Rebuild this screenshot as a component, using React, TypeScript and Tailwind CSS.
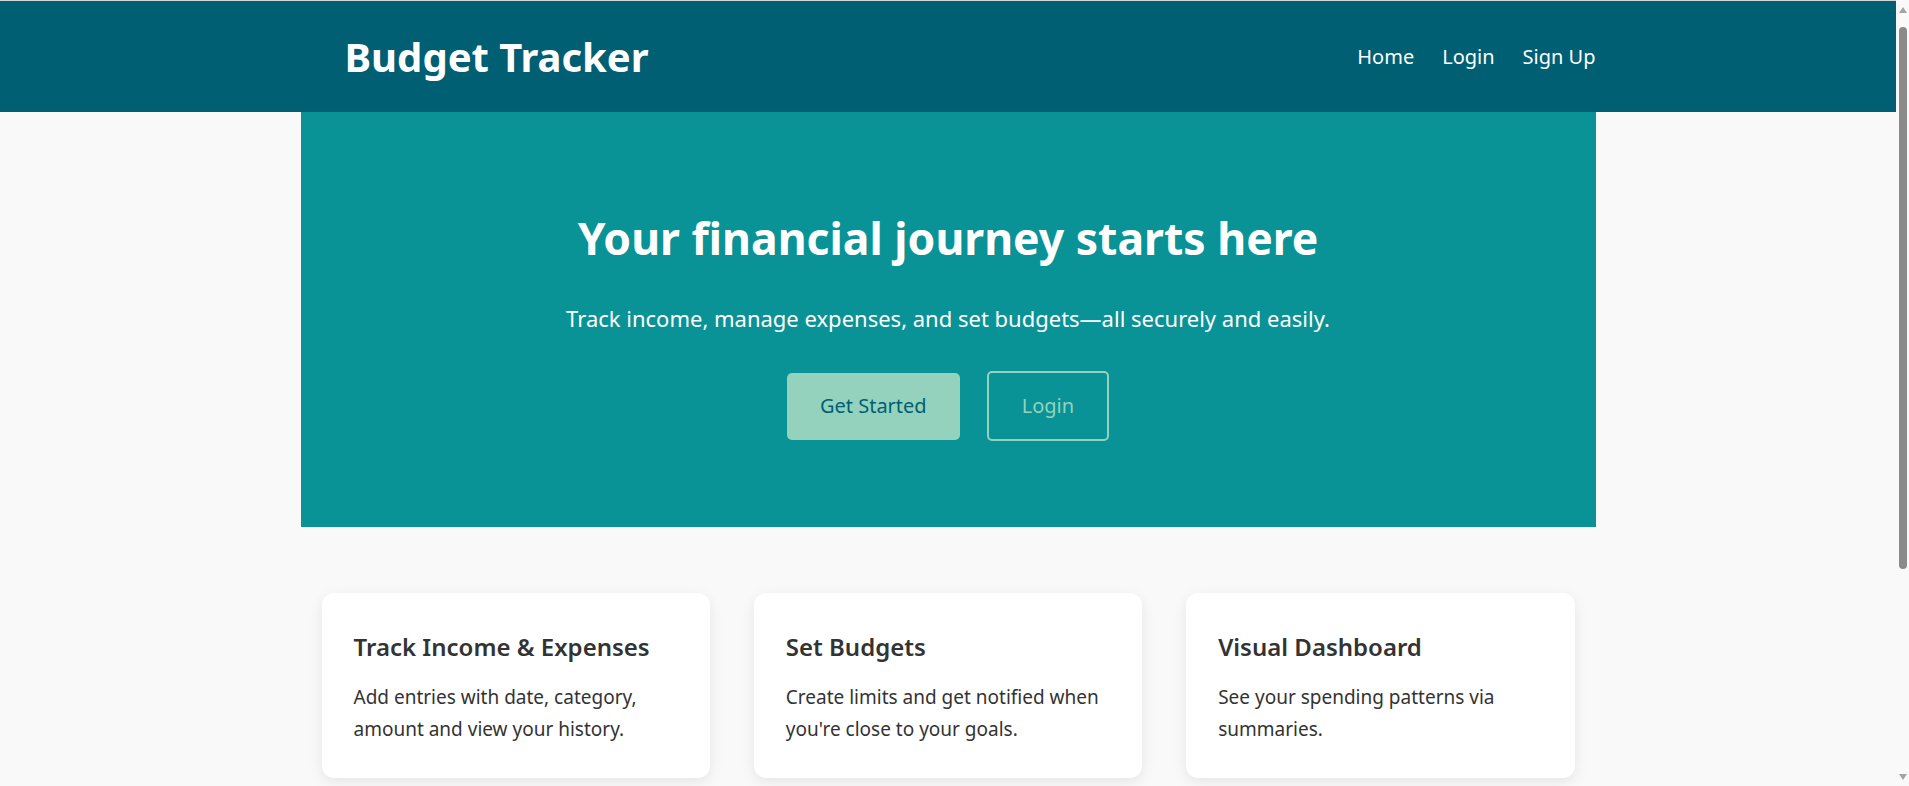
import React from "react";

const features = [
  {
    id: 1,
    title: "Track Income & Expenses",
    text: "Add entries with date, category, amount and view your history.",
  },
  {
    id: 2,
    title: "Set Budgets",
    text: "Create limits and get notified when you're close to your goals.",
  },
  {
    id: 3,
    title: "Visual Dashboard",
    text: "See your spending patterns via summaries.",
  },
];

const App = () => {
  return (
    <div className="min-h-screen bg-[#f9f9f9] pr-[13px] font-['Noto_Sans',sans-serif] text-[#333]">
      {/* Header */}
      <header className="border-t border-[#d6d6d6] bg-[#005f73] text-white">
        <div className="mx-auto flex h-[111px] w-[1295px] items-center justify-between pl-[44px]">
          <h1 className="text-[40px] leading-none font-bold">Budget Tracker</h1>
          <nav className="flex items-center gap-[28px] text-[20px]">
            <a href="#">Home</a>
            <a href="#">Login</a>
            <a href="#">Sign Up</a>
          </nav>
        </div>
      </header>

      <main className="mx-auto w-[1295px]">
        {/* Hero */}
        <section className="flex flex-col items-center bg-[#0a9396] pt-[97px] pb-[86px] text-center text-white">
          <h2 className="text-[44.5px] leading-[58px] font-bold">
            Your financial journey starts here
          </h2>
          <p className="mt-[36px] text-[22px] leading-[31px]">
            Track income, manage expenses, and set budgets—all securely and easily.
          </p>
          <div className="mt-[37px] flex items-center gap-[27px]">
            <button className="h-[67px] rounded-[5px] bg-[#94d2bd] px-[33px] text-[20px] text-[#005f73]">
              Get Started
            </button>
            <button className="h-[70px] rounded-[5px] border-2 border-[#94d2bd] px-[33px] text-[20px] text-[#94d2bd]">
              Login
            </button>
          </div>
        </section>

        {/* Features */}
        <section className="grid grid-cols-3 gap-[44px] px-[21px] pt-[66px] pb-[8px]">
          {features.map((f) => (
            <div
              key={f.id}
              className="rounded-[12px] bg-white px-[32px] pt-[39px] pb-[33px] shadow-[0_4px_14px_rgba(0,0,0,0.08)]"
            >
              <h3 className="text-[24px] leading-[30px] font-semibold text-[#333]">{f.title}</h3>
              <p className="mt-[19px] text-[19px] leading-[32px] text-[#333]">{f.text}</p>
            </div>
          ))}
        </section>
      </main>

      {/* Scrollbar */}
      <div className="fixed top-0 right-0 flex h-screen w-[13px] flex-col items-center bg-[#f9f9f9]">
        <div className="mt-[7px] h-0 w-0 border-x-[4px] border-b-[6px] border-x-transparent border-b-[#a3a3a3]" />
        <div className="mt-[14px] h-[542px] w-[8px] rounded-full bg-[#8a8a8a]" />
        <div className="mt-auto mb-[6px] h-0 w-0 border-x-[4px] border-t-[6px] border-x-transparent border-t-[#a3a3a3]" />
      </div>
    </div>
  );
};

export default App;
